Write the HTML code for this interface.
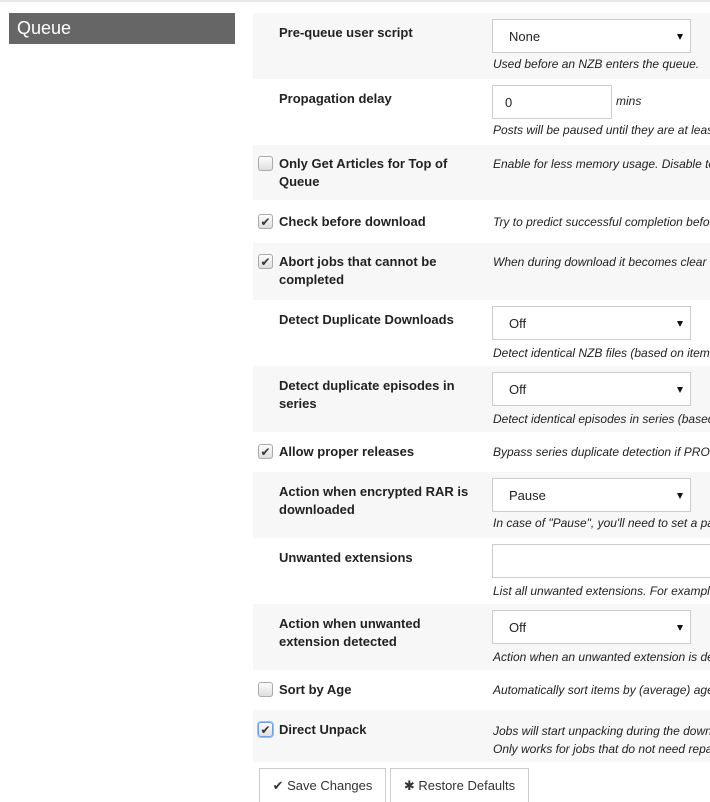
<!DOCTYPE html>
<html><head><style>
body{margin:0;width:710px;height:801px;overflow:hidden;background:#fff;font-family:"Liberation Sans",sans-serif;color:#222;position:relative}
.top{position:absolute;left:0;top:0;width:710px;height:2px;background:#e5e5e5}
.h{position:absolute;left:9px;top:13px;width:226px;height:31px;background:#666;color:#fff;font-size:18px;line-height:31px;padding-left:8px;box-sizing:border-box}
.r{position:absolute;left:253px;width:457px;overflow:hidden}
.g{background:#f7f7f7}
.l{position:absolute;left:26px;width:195px;font-weight:bold;font-size:13px;line-height:18px}
.d{position:absolute;left:240px;font-style:italic;font-size:12px;line-height:18px;white-space:nowrap;color:#222}
.s{position:absolute;left:239px;top:6px;width:199px;height:34px;border:1px solid #ccc;box-sizing:border-box;background:#fff;font-size:13px;line-height:33px;padding-left:16px}
.s:after{content:"";position:absolute;right:7px;top:14px;border-left:3.5px solid transparent;border-right:3.5px solid transparent;border-top:6px solid #111}
.i{position:absolute;left:239px;top:6px;height:34px;border:1px solid #ccc;box-sizing:border-box;background:#fff;font-size:13px;line-height:33px;padding-left:12px}
.c{position:absolute;left:5px;width:15px;height:15px;border:1px solid #aaa;border-radius:3px;background:linear-gradient(#fdfdfd,#ddd);box-sizing:border-box;font-size:12px;line-height:14px;text-align:center;color:#333}
.b{position:absolute;top:768px;height:34px;border:1px solid #ccc;border-bottom:none;box-sizing:border-box;font-size:13px;line-height:33px;text-align:center;color:#333;background:#fff}
</style></head><body>
<div class="top"></div>
<div class="h">Queue</div>

<div class="r g" style="top:13px;height:66px"><div class="l" style="top:11px">Pre-queue user script</div><div class="s">None</div><div class="d" style="top:42px">Used before an NZB enters the queue.</div></div>
<div class="r" style="top:79px;height:66px"><div class="l" style="top:11px">Propagation delay</div><div class="i" style="width:120px">0</div><div class="d" style="left:363px;top:13px">mins</div><div class="d" style="top:42px">Posts will be paused until they are at least this age.</div></div>
<div class="r g" style="top:145px;height:55px"><div class="c" style="top:11px"></div><div class="l" style="top:10px">Only Get Articles for Top of Queue</div><div class="d" style="top:10px">Enable for less memory usage. Disable to</div></div>
<div class="r" style="top:200px;height:43px"><div class="c" style="top:14px">✔</div><div class="l" style="top:13px">Check before download</div><div class="d" style="top:13px">Try to predict successful completion before</div></div>
<div class="r g" style="top:243px;height:57px"><div class="c" style="top:11px">✔</div><div class="l" style="top:10px">Abort jobs that cannot be completed</div><div class="d" style="top:10px">When during download it becomes clear</div></div>
<div class="r" style="top:300px;height:66px"><div class="l" style="top:11px">Detect Duplicate Downloads</div><div class="s">Off</div><div class="d" style="top:44px">Detect identical NZB files (based on items</div></div>
<div class="r g" style="top:366px;height:66px"><div class="l" style="top:11px">Detect duplicate episodes in series</div><div class="s">Off</div><div class="d" style="top:44px">Detect identical episodes in series (based</div></div>
<div class="r" style="top:432px;height:40px"><div class="c" style="top:12px">✔</div><div class="l" style="top:11px">Allow proper releases</div><div class="d" style="top:11px">Bypass series duplicate detection if PROPER</div></div>
<div class="r g" style="top:472px;height:66px"><div class="l" style="top:11px">Action when encrypted RAR is downloaded</div><div class="s">Pause</div><div class="d" style="top:42px">In case of "Pause", you'll need to set a password</div></div>
<div class="r" style="top:538px;height:66px"><div class="l" style="top:11px">Unwanted extensions</div><div class="i" style="width:240px"></div><div class="d" style="top:44px">List all unwanted extensions. For example</div></div>
<div class="r g" style="top:604px;height:66px"><div class="l" style="top:11px">Action when unwanted extension detected</div><div class="s">Off</div><div class="d" style="top:44px">Action when an unwanted extension is detected</div></div>
<div class="r" style="top:670px;height:40px"><div class="c" style="top:12px"></div><div class="l" style="top:11px">Sort by Age</div><div class="d" style="top:11px">Automatically sort items by (average) age</div></div>
<div class="r g" style="top:710px;height:52px"><div class="c" style="top:12px;border-color:#6a9ee6;box-shadow:0 0 0 1px #9cc0f0">✔</div><div class="l" style="top:11px">Direct Unpack</div><div class="d" style="top:12px">Jobs will start unpacking during the download<br>Only works for jobs that do not need repair</div></div>

<div class="b" style="left:259px;width:127px">✔ Save Changes</div>
<div class="b" style="left:390px;width:139px">✱ Restore Defaults</div>
</body></html>
